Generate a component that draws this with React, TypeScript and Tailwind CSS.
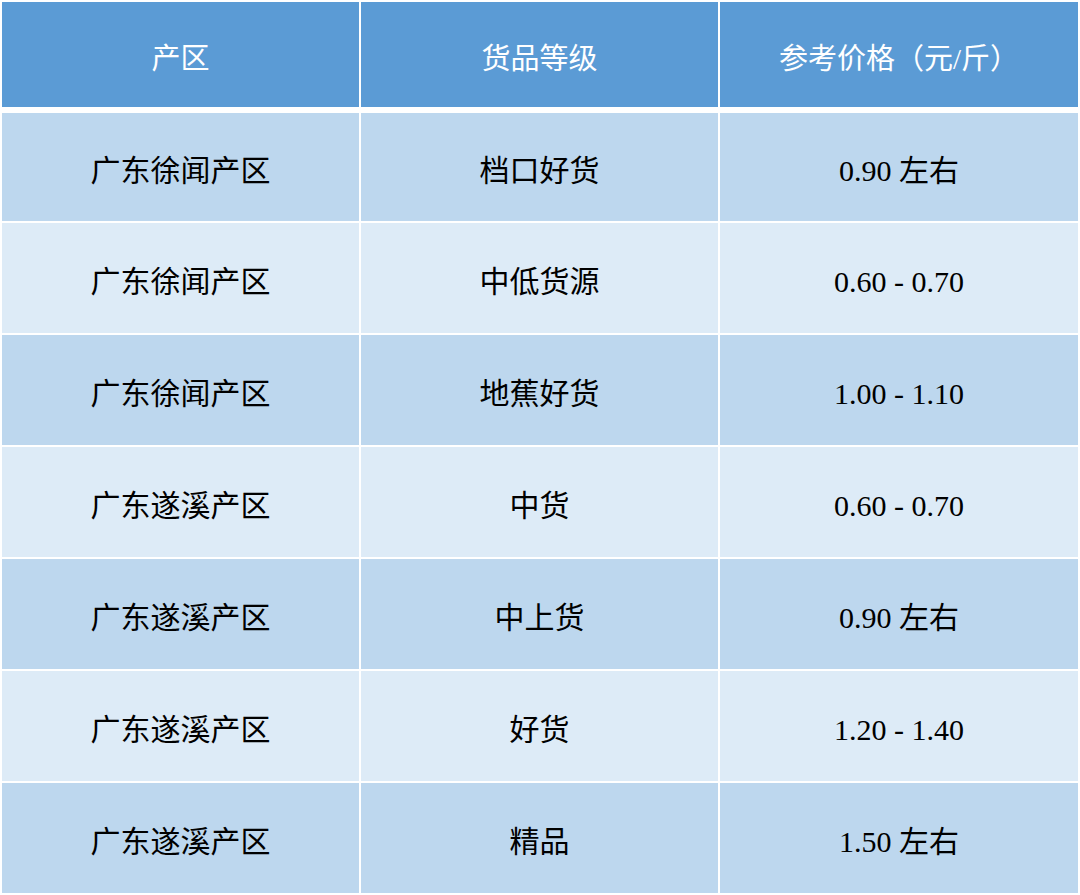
const rows = [
  { area: "广东徐闻产区", grade: "档口好货", price: "0.90 左右" },
  { area: "广东徐闻产区", grade: "中低货源", price: "0.60 - 0.70" },
  { area: "广东徐闻产区", grade: "地蕉好货", price: "1.00 - 1.10" },
  { area: "广东遂溪产区", grade: "中货", price: "0.60 - 0.70" },
  { area: "广东遂溪产区", grade: "中上货", price: "0.90 左右" },
  { area: "广东遂溪产区", grade: "好货", price: "1.20 - 1.40" },
  { area: "广东遂溪产区", grade: "精品", price: "1.50 左右" },
]

const font = { fontFamily: '"Liberation Serif", "Noto Sans CJK SC", serif' }

export default function App() {
  return (
    <div className="w-[1080px] h-[895px] bg-white p-[2px] flex flex-col" style={font}>
      {/* header */}
      <div className="grid grid-cols-[357px_357px_1fr] gap-[2px] h-[106px] mb-[6px]">
        {["产区", "货品等级", "参考价格（元/斤）"].map((h) => (
          <div key={h} className="bg-[#5b9bd5] flex items-center justify-center pt-[10px] text-white text-[29px]">
            {h}
          </div>
        ))}
      </div>

      {/* body */}
      <div className="flex flex-col gap-[2px]">
        {rows.map((r, i) => (
          <div
            key={i}
            className={`grid grid-cols-[357px_357px_1fr] gap-[2px] ${i === 0 ? "h-[108px]" : "h-[110px]"}`}
          >
            {[r.area, r.grade, r.price].map((c, j) => (
              <div
                key={j}
                className={`flex items-center justify-center pt-[6px] text-black text-[30px] ${
                  i % 2 === 0 ? "bg-[#bdd7ee]" : "bg-[#ddebf7]"
                }`}
              >
                {c}
              </div>
            ))}
          </div>
        ))}
      </div>
    </div>
  )
}
